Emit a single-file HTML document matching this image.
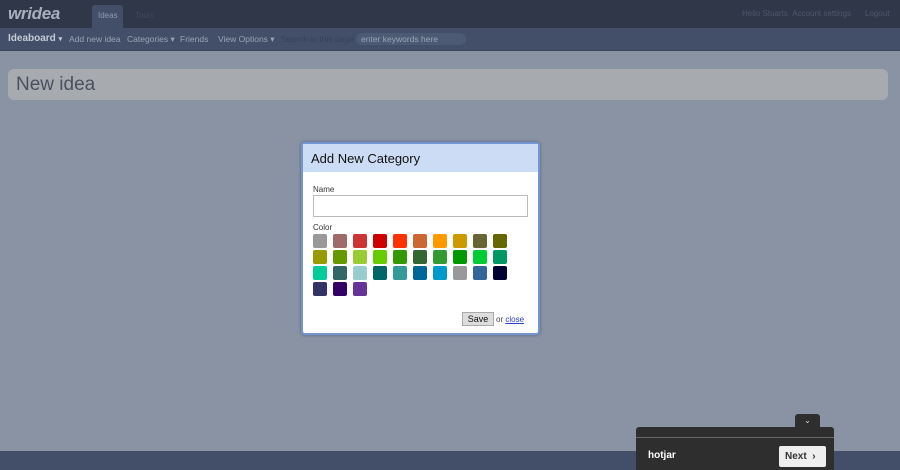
<!DOCTYPE html><html><head><style>
body{margin:0;width:900px;height:470px;overflow:hidden;background:#8a93a3;font-family:"Liberation Sans",sans-serif;position:relative}
.a{position:absolute}
.top{left:0;top:0;width:900px;height:28px;background:#2f3749}
.nav{left:0;top:28px;width:900px;height:22px;background:#434f68;border-bottom:1px solid #3a4559}
.sw{position:absolute;width:14px;height:14px;border-radius:2px}
</style></head><body>
<div class="a top"></div>
<div class="a" style="left:8px;top:4px;font-size:17px;font-weight:bold;font-style:italic;color:#a9b0bd;letter-spacing:-0.3px">wridea</div>
<div class="a" style="left:92px;top:5px;width:31px;height:23px;background:#434f68;border-radius:3px 3px 0 0"></div>
<div class="a" style="left:98px;top:11px;font-size:8px;color:#8f9bb0">Ideas</div>
<div class="a" style="left:135px;top:11px;font-size:8px;color:#3f4a5e">Tools</div>
<div class="a" style="left:742px;top:9px;font-size:8px;color:#4e586b">Hello Stuarts &nbsp;Account settings</div>
<div class="a" style="left:865px;top:9px;font-size:8px;color:#4e586b">Logout</div>
<div class="a nav"></div>
<div class="a" style="left:8px;top:33px;font-size:10px;font-weight:bold;color:#c5cbd5">Ideaboard <span style="font-size:7px">▾</span></div>
<div class="a" style="left:69px;top:34px;font-size:8.5px;color:#9aa4b5">Add new idea</div>
<div class="a" style="left:127px;top:34px;font-size:8.5px;color:#9aa4b5">Categories ▾</div>
<div class="a" style="left:180px;top:34px;font-size:8.5px;color:#9aa4b5">Friends</div>
<div class="a" style="left:218px;top:34px;font-size:8.5px;color:#9aa4b5">View Options ▾</div>
<div class="a" style="left:281px;top:34px;font-size:8.5px;color:#36405a">Search in this page</div>
<div class="a" style="left:356px;top:33px;width:110px;height:12px;background:#4d5a74;border-radius:6px"></div>
<div class="a" style="left:361px;top:34px;font-size:8.5px;color:#9aa4b5">enter keywords here</div>
<div class="a" style="left:8px;top:69px;width:880px;height:31px;background:#a7abb0;border-radius:6px"></div>
<div class="a" style="left:16px;top:74px;font-size:19px;color:#4a5060">New idea</div>
<div class="a" style="left:301px;top:142px;width:235px;height:189px;background:#fff;border:2px solid #7495d4;border-radius:4px;box-shadow:0 0 3px #55607a"></div>
<div class="a" style="left:303px;top:144px;width:235px;height:28px;background:#cddcf5"></div>
<div class="a" style="left:311px;top:151px;font-size:13px;color:#111">Add New Category</div>
<div class="a" style="left:313px;top:185px;font-size:8px;color:#333">Name</div>
<div class="a" style="left:313px;top:195px;width:213px;height:20px;border:1px solid #bbb"></div>
<div class="a" style="left:313px;top:223px;font-size:8px;color:#333">Color</div>
<div id="sw"></div>
<div class="a" style="left:462px;top:312px;width:30px;height:12px;background:#ddd;border:1px solid #aaa;font-size:9px;text-align:center;line-height:12px;color:#111">Save</div>
<div class="a" style="left:496px;top:315px;font-size:8px;color:#444">or <span style="color:#2a3fcc;text-decoration:underline">close</span></div>
<div class="a" style="left:0;top:451px;width:900px;height:19px;background:#434f68"></div>
<div class="a" style="left:795px;top:414px;width:25px;height:16px;background:#2e2e2e;border-radius:3px 3px 0 0;color:#ddd;font-size:8px;text-align:center;line-height:13px">⌄</div>
<div class="a" style="left:636px;top:427px;width:198px;height:43px;background:#2e2e2e;border-radius:3px 3px 0 0"></div>
<div class="a" style="left:636px;top:437px;width:198px;height:1px;background:#666"></div>
<div class="a" style="left:648px;top:450px;font-size:10px;font-weight:bold;color:#fff">hotjar</div>
<div class="a" style="left:779px;top:446px;width:47px;height:21px;background:#eee;border-radius:2px;font-size:10px;font-weight:bold;color:#333;line-height:21px;padding-left:6px;box-sizing:border-box">Next &nbsp;›</div>
<script>
var c=["#999","#a06a6a","#cc3333","#cc0000","#ff3300","#cc6633","#ff9900","#cc9900","#666633","#666600","#999900","#669900","#99cc33","#66cc00","#339900","#336633","#339933","#009900","#00cc33","#009966","#00cc99","#336666","#99cccc","#006666","#339999","#006699","#0099cc","#999999","#336699","#000033","#333366","#330066","#663399"];
var h="";c.forEach(function(x,i){h+='<div class="sw" style="left:'+(313+20*(i%10))+'px;top:'+(234+16*Math.floor(i/10))+'px;background:'+x+'"></div>'});
document.getElementById("sw").outerHTML=h;
</script>
</body></html>
